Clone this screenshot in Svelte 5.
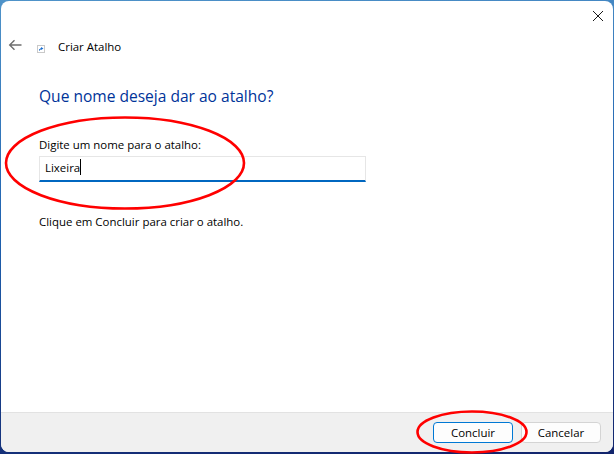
<script>
  const title = 'Criar Atalho';
</script>

<div class="desktop">
  <div class="window">
    <div class="titlebar">
      <button class="close" aria-label="Fechar">
        <svg width="10" height="10" viewBox="0 0 10 10"><path d="M0 0L10 10M10 0L0 10" stroke="#1a1a1a" stroke-width="1" fill="none" /></svg>
      </button>
    </div>
    <div class="nav">
      <svg class="back" width="14" height="12" viewBox="0 0 14 12"><path d="M13.5 6H2M6.5 1.2L1.7 6l4.8 4.8" stroke="#6e6e6e" stroke-width="1.4" fill="none" /></svg>
      <svg class="shortcut" width="8" height="8" viewBox="0 0 8 8">
        <rect x="0.5" y="0.5" width="7" height="7" fill="#fff" stroke="#c9c9c9" />
        <path d="M2 6V4.5L4 3V2L6.5 3.5L4 5V4.2Z" fill="#1c6fd0" />
      </svg>
      <span class="title">{title}</span>
    </div>

    <div class="content">
      <h1>Que nome deseja dar ao atalho?</h1>
      <label for="name">Digite um nome para o atalho:</label>
      <div class="field" id="name">Lixeira<span class="caret"></span></div>
      <p>Clique em Concluir para criar o atalho.</p>
    </div>

    <div class="footer">
      <button class="btn primary">Concluir</button>
      <button class="btn">Cancelar</button>
    </div>
  </div>

  <svg class="marks" width="614" height="454" viewBox="0 0 614 454">
    <ellipse cx="125" cy="163" rx="119" ry="45.5" fill="none" stroke="#ff0000" stroke-width="2.6" />
    <ellipse cx="472" cy="432" rx="54.5" ry="20.5" fill="none" stroke="#ff0000" stroke-width="2.6" />
  </svg>
</div>

<style>
  :global(body) {
    margin: 0;
  }

  .desktop {
    position: relative;
    width: 614px;
    height: 454px;
    overflow: hidden;
    padding: 1px 1px 2px 1px;
    box-sizing: border-box;
    background: linear-gradient(175deg, #4f93c9, #1f62b0 45%, #12246c);
    font-family: "Open Sans", "Noto Sans", sans-serif;
    font-size: 11.45px;
    color: #000;
  }

  .window {
    height: 100%;
    display: flex;
    flex-direction: column;
    background: #fff;
    border-radius: 8px;
    overflow: hidden;
  }

  .titlebar {
    display: flex;
    justify-content: flex-end;
    height: 30px;
    flex: none;
  }

  .close {
    width: 30px;
    height: 30px;
    padding: 0;
    border: 0;
    background: none;
    display: flex;
    align-items: center;
    justify-content: center;
  }

  .nav {
    display: flex;
    align-items: center;
    height: 30px;
    padding-left: 7px;
  }

  .back {
    flex: none;
    margin-top: -2px;
  }

  .shortcut {
    margin: 5px 0 0 15px;
    flex: none;
  }

  .title {
    margin-left: 13px;
  }

  .content {
    flex: 1;
    padding: 24px 0 0 38px;
  }

  h1 {
    margin: 0 0 30px;
    font-size: 15.55px;
    font-weight: 400;
    color: #003399;
    line-height: 22px;
  }

  label {
    display: block;
    line-height: 16px;
  }

  .field {
    width: 327px;
    height: 26px;
    box-sizing: border-box;
    margin-top: 3px;
    padding-left: 5px;
    border: 1px solid #e6e6e6;
    border-bottom: 2px solid #0067c0;
    line-height: 21px;
  }

  .caret {
    display: inline-block;
    width: 1px;
    height: 16px;
    background: #000;
    vertical-align: -3px;
  }

  p {
    margin: 32px 0 0;
    line-height: 16px;
  }

  .footer {
    flex: none;
    height: 40px;
    box-sizing: border-box;
    display: flex;
    justify-content: flex-end;
    align-items: center;
    gap: 8px;
    padding-right: 12px;
    background: #f0f0f0;
    border-top: 1px solid #e2e2e2;
  }

  .btn {
    width: 80px;
    height: 21px;
    padding: 0;
    font: inherit;
    color: inherit;
    background: #fdfdfd;
    border: 1px solid #d4d4d4;
    border-radius: 4px;
  }

  .primary {
    border: 1px solid #0078d4;
  }

  .marks {
    position: absolute;
    left: 0;
    top: 0;
    pointer-events: none;
  }
</style>
